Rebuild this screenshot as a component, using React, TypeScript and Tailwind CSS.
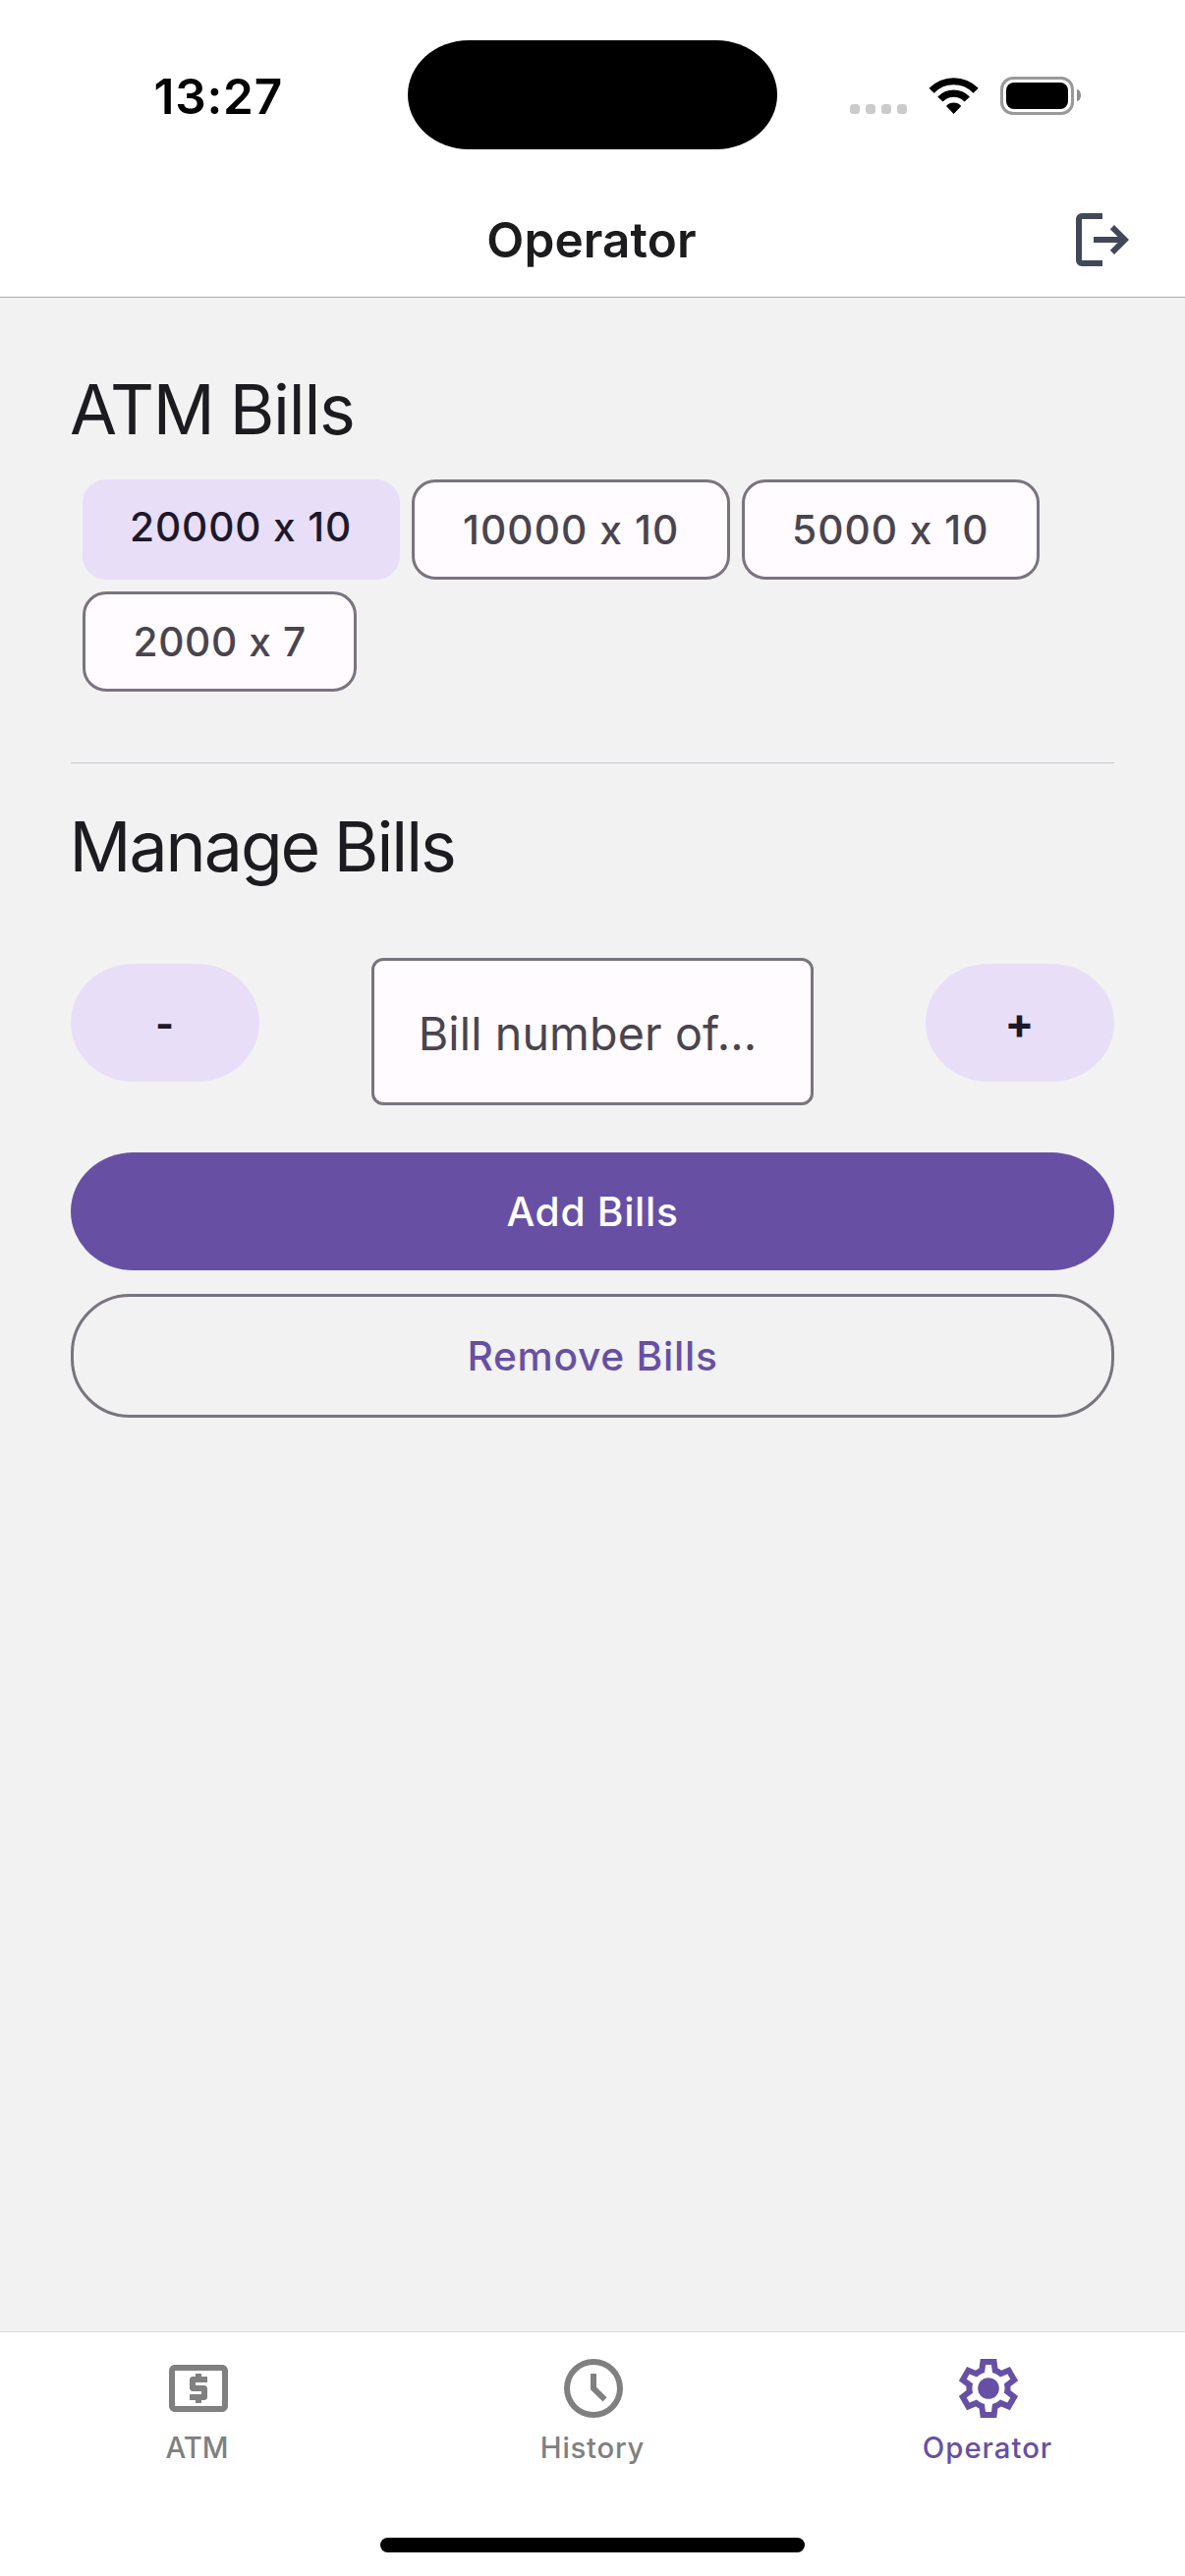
import { MdOutlineLocalAtm } from "react-icons/md";

const chips = [
  { label: "20000 x 10", selected: true, box: "w-[323px] pl-[48px] tracking-[0.85px]" },
  { label: "10000 x 10", selected: false, box: "w-[324px] pl-[49px] tracking-[1.08px]" },
  { label: "5000 x 10", selected: false, box: "w-[303px] pl-[48px] tracking-[1px]" },
  { label: "2000 x 7", selected: false, box: "w-[279px] pl-[48.5px] tracking-[0.6px]" },
];

function WifiIcon() {
  return (
    <svg className="ml-[22px] mt-[79px] h-[37px] w-[51px]" viewBox="0 0 51 37" fill="none">
      <path d="M3.1 13.3A31.3 31.3 0 0 1 48.1 13.3" stroke="#000" strokeWidth="7.2" />
      <path d="M11.9 22.1A18.8 18.8 0 0 1 39.3 22.1" stroke="#000" strokeWidth="7.3" />
      <path d="M18 29A9.8 9.8 0 0 1 33.2 29L25.6 37Z" fill="#000" />
    </svg>
  );
}

function StatusBar() {
  return (
    <div className="flex h-[186px] shrink-0 items-start">
      <div className="ml-[156.5px] mt-[68px] w-[258.5px] text-[49.5px] font-semibold leading-[60px] tracking-[0.8px] text-black">
        13:27
      </div>
      <div className="mt-[41px] h-[111px] w-[376px] rounded-[62px/55.5px] bg-black" />
      <div className="ml-[74px] mt-[106px] flex gap-[6px]">
        {[0, 1, 2, 3].map((n) => (
          <span key={n} className="size-[10px] rounded-[3.5px] bg-[#cbcbcb]" />
        ))}
      </div>
      <WifiIcon />
      <div className="ml-[22px] mt-[78px] h-[39px] w-[75px] rounded-[13px] border-[3px] border-[#999] p-[3px]">
        <div className="h-full w-full rounded-[8px] bg-black" />
      </div>
      <div className="ml-[3px] mt-[91px] h-[12px] w-[4px] rounded-[0_4px_4px_0/0_6px_6px_0] bg-[#8c8c8c]" />
    </div>
  );
}

function Header() {
  return (
    <div className="grid h-[117px] shrink-0 grid-cols-[1fr_auto_1fr] items-center border-b border-[#a9a9aa]">
      <span />
      <h1 className="pb-[1px] pr-[2px] text-[49.5px] font-semibold leading-[60px] tracking-[0.1px] text-[#1c1c1e]">
        Operator
      </h1>
      <svg className="mr-[48px] size-[72px] justify-self-end" viewBox="0 0 24 24" fill="#424858">
        <path d="M12 3H5a2 2 0 0 0-2 2v14a2 2 0 0 0 2 2h7v-2H5V5h7z" />
        <path d="M16 7l-1.4 1.4 2.6 2.6H9v2h8.2l-2.6 2.6L16 17l5-5z" />
      </svg>
    </div>
  );
}

function BillChips() {
  return (
    <div className="flex h-[216px] flex-wrap content-start gap-[12px] pl-[12px]">
      {chips.map((c) => (
        <div
          key={c.label}
          className={
            "flex h-[102px] items-center whitespace-nowrap rounded-[24px] text-[40.7px] font-medium leading-[60px] " +
            (c.selected
              ? "bg-[#e8def8] pb-[4px] text-[#1d192b] "
              : "border-[3px] border-[#79747e] bg-[#fffbfe] pt-[2px] text-[#49454f] ") +
            c.box
          }
        >
          {c.label}
        </div>
      ))}
    </div>
  );
}

const tonal =
  "mt-[6px] flex h-[120px] w-[192px] items-center justify-center rounded-[64px/60px] bg-[#e8def8] font-bold leading-[60px] text-[#1d192b]";

function TabBar() {
  return (
    <div className="flex h-[249px] shrink-0 flex-col items-center border-t border-[#d8d8d8] bg-white">
      <div className="grid w-full grid-cols-3 pt-[21px] text-[29.3px] font-medium leading-[36px] text-[#808080]">
        <div className="flex flex-col items-center gap-[7px]">
          <MdOutlineLocalAtm className="size-[72px] translate-x-[1px]" />
          <span className="mr-[1px]">ATM</span>
        </div>
        <div className="flex flex-col items-center gap-[7px]">
          <svg className="size-[72px] translate-x-[1px]" viewBox="0 0 24 24" fill="currentColor">
            <path
              fillRule="evenodd"
              d="M12 2a10 10 0 1 0 0 20 10 10 0 0 0 0-20zM12 4a8 8 0 1 1 0 16 8 8 0 0 1 0-16z"
            />
            <path d="M11 7h2v4.6l3.5 3.5-1.3 1.4L11 12.4z" />
          </svg>
          <span className="tracking-[0.76px]">History</span>
        </div>
        <div className="flex flex-col items-center gap-[7px] text-[#6750a4]">
          <svg className="size-[72px] translate-x-[1px]" viewBox="0 0 24 24" fill="currentColor">
            <path
              fillRule="evenodd"
              d="M9.25 22l-.4-3.2q-.325-.125-.612-.3-.288-.175-.563-.375L4.7 19.375l-2.75-4.75 2.575-1.95Q4.5 12.5 4.5 12.338v-.675q0-.163.025-.338L1.95 9.375l2.75-4.75 2.975 1.25q.275-.2.575-.375.3-.175.6-.3l.4-3.2h5.5l.4 3.2q.325.125.613.3.287.175.562.375l2.975-1.25 2.75 4.75-2.575 1.95q.025.175.025.338v.674q0 .163-.05.338l2.575 1.95-2.75 4.75-2.95-1.25q-.275.2-.575.375-.3.175-.6.3l-.4 3.2zM11 20h1.975l.35-2.65q.775-.2 1.438-.588.662-.387 1.212-.937l2.475 1.025.975-1.7-2.15-1.625q.125-.35.175-.738.05-.387.05-.787t-.05-.788q-.05-.387-.175-.737l2.15-1.625-.975-1.7-2.475 1.05q-.55-.575-1.212-.963-.663-.387-1.438-.587L13 4h-1.975l-.35 2.65q-.775.2-1.437.587-.663.388-1.213.938L5.55 7.15l-.975 1.7 2.15 1.6q-.125.375-.175.75-.05.375-.05.8 0 .4.05.775t.175.75l-2.15 1.625.975 1.7 2.475-1.05q.55.575 1.213.963.662.387 1.437.587z"
            />
            <circle cx="12" cy="12" r="3.6" />
          </svg>
          <span className="tracking-[1px]">Operator</span>
        </div>
      </div>
      <div className="mt-[73px] h-[15px] w-[432px] rounded-full bg-black" />
    </div>
  );
}

export default function App() {
  return (
    <div className="flex h-[2622px] w-[1206px] flex-col overflow-hidden bg-white font-[Inter,sans-serif]">
      <StatusBar />
      <Header />
      <main className="flex flex-1 flex-col bg-[#f2f2f2] px-[72px] pt-[66px]">
        <h2 className="-ml-[1px] mb-[23px] text-[69.7px] leading-[96px] tracking-[-1.2px] text-[#1c1b1f] [word-spacing:-2.2px]">
          ATM Bills
        </h2>
        <BillChips />
        <div className="mt-[72px] h-px bg-[#cac4d0]" />
        <h2 className="-ml-[1.5px] mt-[37px] text-[69.7px] leading-[96px] tracking-[-2px] text-[#1c1b1f] [word-spacing:-2px]">
          Manage Bills
        </h2>
        <div className="mt-[65px] flex h-[150px] items-start justify-between">
          <div className={tonal + " pr-[1px] pt-[3px] text-[40.7px]"}>-</div>
          <div className="flex h-[150px] w-[450px] items-center whitespace-nowrap rounded-[12px] border-[3px] border-[#79747e] bg-[#fffbfe] pl-[44.7px] pt-[4px] text-[46.6px] leading-[60px] tracking-[0.13px] text-[#49454f]">
            Bill number of...
          </div>
          <div className={tonal + " pr-[1px] text-[44px]"}>+</div>
        </div>
        <div className="mt-[48px] flex h-[120px] items-center justify-center rounded-[64px/60px] bg-[#6750a4] pt-[2px] text-[40.7px] font-medium leading-[60px] tracking-[0.68px] text-white">
          Add Bills
        </div>
        <div className="mt-[24px] flex h-[126px] items-center justify-center rounded-[60px] border-[3px] border-[#79747e] pt-[2px] text-[40.7px] font-medium leading-[60px] tracking-[0.73px] text-[#6750a4]">
          Remove Bills
        </div>
      </main>
      <TabBar />
    </div>
  );
}
